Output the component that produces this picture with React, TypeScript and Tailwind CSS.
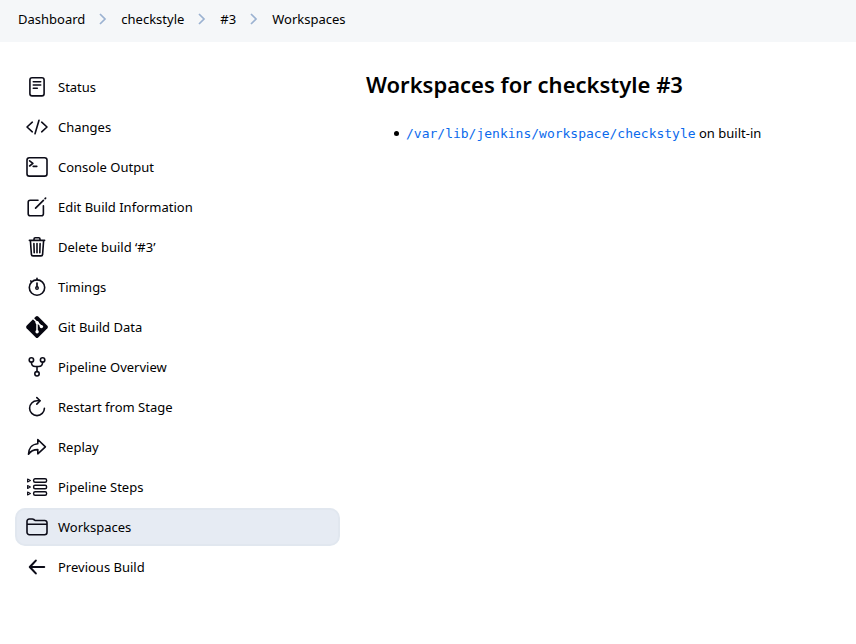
import { Fragment, type ReactNode } from "react";

const tasks: { label: string; icon: ReactNode; active?: boolean }[] = [
  {
    label: "Status",
    icon: (
      <>
        <rect x="4.9" y="2.7" width="14.2" height="18.2" rx="2.2" />
        <path d="M8.3 6.8h7.4M8.3 10h7.4M8.3 13.2h4" />
      </>
    ),
  },
  {
    label: "Changes",
    icon: <path d="M7.3 7.2 2 12l5.3 4.8M16.7 7.2 22 12l-5.3 4.8M14 5.2 10 18.8" />,
  },
  {
    label: "Console Output",
    icon: (
      <>
        <rect x="2" y="2.7" width="20" height="18.4" rx="2.4" />
        <path d="m4.6 5.8 3.3 2.6-3.3 2.6M8.2 11.4h3.6" />
      </>
    ),
  },
  {
    label: "Edit Build Information",
    icon: (
      <>
        <path d="M13 5.2H5.2a2 2 0 0 0-2 2v11.6a2 2 0 0 0 2 2h11.2a2 2 0 0 0 2-2v-8" />
        <path d="m10.6 13.2 7.8-7.8M20.1 3.7l.5-.5" strokeWidth="1.7" />
      </>
    ),
  },
  {
    label: "Delete build ‘#3’",
    icon: (
      <>
        <path d="m5.4 5.6 1 13.8a1.6 1.6 0 0 0 1.6 1.5h8a1.6 1.6 0 0 0 1.6-1.5l1-13.8M4.4 5.4h15.2M9 5.2V3.9c0-.7.5-1.2 1.2-1.2h3.6c.7 0 1.2.5 1.2 1.2v1.3" />
        <path d="M12 8.6v9.2M8.9 8.6l.3 9.2M15.1 8.6l-.3 9.2" />
      </>
    ),
  },
  {
    label: "Timings",
    icon: (
      <>
        <circle cx="12" cy="12.6" r="7.7" />
        <path d="M12 3.4v1.2M12 8v3.4M6.4 6.6 5.8 6" strokeWidth="1.7" />
        <circle cx="12" cy="13" r="1.3" strokeWidth="1.4" />
      </>
    ),
  },
  {
    label: "Git Build Data",
    icon: (
      <>
        <path d="M10.8 1.6a1.7 1.7 0 0 1 2.4 0l9.2 9.2a1.7 1.7 0 0 1 0 2.4l-9.2 9.2a1.7 1.7 0 0 1-2.4 0l-9.2-9.2a1.7 1.7 0 0 1 0-2.4Z" fill="#05050f" stroke="none" />
        <path d="m8.2 3.4 3.8 3.8v9.6M12.4 7.4l4 4" stroke="white" strokeWidth="1.5" />
        <g fill="white" stroke="none">
          <circle cx="12.1" cy="7.6" r="1.7" />
          <circle cx="12.1" cy="16.8" r="1.7" />
          <circle cx="16.4" cy="11.6" r="1.7" />
        </g>
      </>
    ),
  },
  {
    label: "Pipeline Overview",
    icon: (
      <>
        <circle cx="6.4" cy="4.9" r="2.2" />
        <circle cx="17.6" cy="4.9" r="2.2" />
        <circle cx="12" cy="18.8" r="2.2" />
        <path d="M6.4 7.2c0 3 1.8 4.3 4 4.3h3.2c2.2 0 4-1.3 4-4.3M12 11.6v5" />
      </>
    ),
  },
  {
    label: "Restart from Stage",
    icon: (
      <>
        <path d="M19.4 13.2A7.4 7.4 0 1 1 12 5.8h2.8" />
        <path d="m11.8 2.6 3.3 3.2-3.3 3.3" />
      </>
    ),
  },
  {
    label: "Replay",
    icon: <path d="m12.8 4.5 7.6 7.3-7.6 7v-4.2c-4.6 0-7.2 1.4-9.3 4.6 0-5.3 3-10 9.3-10.5Z" />,
  },
  {
    label: "Pipeline Steps",
    icon: (
      <>
        <g strokeWidth="1.4">
          <rect x="8.6" y="3.8" width="13" height="3.4" rx="1.5" />
          <rect x="8.6" y="10.3" width="13" height="3.4" rx="1.5" />
          <rect x="8.6" y="16.8" width="13" height="3.4" rx="1.5" />
        </g>
        <path d="m2.6 4 2.8 1.5L2.6 7ZM2.6 10.5 5.4 12l-2.8 1.5ZM2.6 17l2.8 1.5L2.6 20Z" strokeWidth="1.1" />
      </>
    ),
  },
  {
    label: "Workspaces",
    active: true,
    icon: (
      <path d="M2 9.2h20M2 9V6.3A2.2 2.2 0 0 1 4.2 4h3.2c.5 0 1 .2 1.4.5l.8.6c.4.3.9.4 1.4.4h8.8A2.2 2.2 0 0 1 22 7.7v9.6a2.4 2.4 0 0 1-2.4 2.4H4.4A2.4 2.4 0 0 1 2 17.3Z" />
    ),
  },
  {
    label: "Previous Build",
    icon: <path d="M10.8 5.6 4.8 12l6 6.4M5.2 12h14" strokeWidth="2.1" />,
  },
];

const crumbs = ["Dashboard", "checkstyle", "#3", "Workspaces"];

export default function App() {
  return (
    <div className="min-h-screen bg-white font-['Noto_Sans',sans-serif] text-[13px] leading-5 text-black">
      <nav aria-label="Breadcrumb" className="flex h-[42px] items-center bg-[#f5f7f9] px-[18px] pb-1">
        <ol className="flex items-center gap-3">
          {crumbs.map((crumb, i) => (
            <Fragment key={crumb}>
              {i > 0 && (
                <li aria-hidden="true">
                  <svg viewBox="0 0 12 12" className="size-3 fill-none stroke-[#9bb2d1]" strokeWidth="1.7">
                    <path d="m3 1 5 5-5 5" />
                  </svg>
                </li>
              )}
              <li>
                <a href="#">{crumb}</a>
              </li>
            </Fragment>
          ))}
        </ol>
      </nav>
      <div className="flex gap-[26px] px-[15px] pt-[26px]">
        <aside className="w-[325px] shrink-0">
          <ul className="flex flex-col gap-0.5">
            {tasks.map((task) => (
              <li key={task.label}>
                <a
                  href="#"
                  aria-current={task.active ? "page" : undefined}
                  className={`flex h-[38px] items-center gap-[9px] rounded-[10px] border-2 px-2 ${
                    task.active ? "border-[#e1e7ef] bg-[#e6ebf3]" : "border-transparent"
                  }`}
                >
                  <svg
                    viewBox="0 0 24 24"
                    aria-hidden="true"
                    className="size-6 fill-none stroke-current text-[#0c0c18]"
                    strokeWidth="1.6"
                    strokeLinecap="round"
                    strokeLinejoin="round"
                  >
                    {task.icon}
                  </svg>
                  {task.label}
                </a>
              </li>
            ))}
          </ul>
        </aside>
        <main className="min-w-0 flex-1">
          <h1 className="text-[22px] leading-8 font-semibold">Workspaces for checkstyle #3</h1>
          <ul className="mt-[23px] pl-7">
            <li className="flex items-center gap-[7px] before:size-[5px] before:shrink-0 before:rounded-full before:bg-black">
              <span>
                <a href="#" className="font-['DejaVu_Sans_Mono',monospace] text-[#0b6aec]">
                  /var/lib/jenkins/workspace/checkstyle
                </a>{" "}
                on built-in
              </span>
            </li>
          </ul>
        </main>
      </div>
    </div>
  );
}
